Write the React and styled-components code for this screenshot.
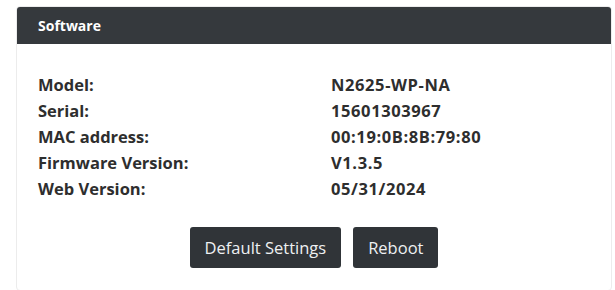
import styled, { createGlobalStyle } from "styled-components";

const GlobalStyle = createGlobalStyle`
  html, body {
    margin: 0;
    padding: 0;
    background: #fff;
  }
  body {
    font-family: "Open Sans", "Noto Sans", sans-serif;
  }
`;

const Page = styled.div`
  width: 615px;
  height: 290px;
  padding: 6px 3px 1px 16px;
  box-sizing: border-box;
`;

const Card = styled.section`
  height: 100%;
  border: 1px solid #ececec;
  border-radius: 4px;
  overflow: hidden;
  display: flex;
  flex-direction: column;
  background: #fff;
`;

const CardHeader = styled.div`
  background: #35393d;
  color: #fff;
  height: 37px;
  display: flex;
  align-items: center;
  padding-left: 21px;
  font-size: 14px;
  font-weight: 700;
`;

const CardBody = styled.div`
  flex: 1;
  padding: 28px 21px 0;
  display: flex;
  flex-direction: column;
`;

const InfoGrid = styled.div`
  display: grid;
  grid-template-columns: 293px 1fr;
`;

const Cell = styled.div`
  font-size: 16.5px;
  font-weight: 700;
  color: #2e2e2e;
  line-height: 26px;
  height: 26px;
  letter-spacing: ${(p) => (p.$value ? "0.6px" : "0")};
`;

const Actions = styled.div`
  display: flex;
  justify-content: center;
  gap: 12px;
  margin-top: 25px;
`;

const Button = styled.button`
  background: #303438;
  color: #eef0f2;
  border: none;
  border-radius: 3px;
  height: 41px;
  padding: 0 15px;
  font-family: "Open Sans", "Noto Sans", sans-serif;
  font-size: 16.5px;
  cursor: pointer;
`;

const rows = [
  ["Model:", "N2625-WP-NA"],
  ["Serial:", "15601303967"],
  ["MAC address:", "00:19:0B:8B:79:80"],
  ["Firmware Version:", "V1.3.5"],
  ["Web Version:", "05/31/2024"],
];

export default function App() {
  return (
    <>
      <GlobalStyle />
      <Page>
        <Card>
          <CardHeader>Software</CardHeader>
          <CardBody>
            <InfoGrid>
              {rows.flatMap(([label, value]) => [
                <Cell key={label}>{label}</Cell>,
                <Cell key={label + "-v"} $value>
                  {value}
                </Cell>,
              ])}
            </InfoGrid>
            <Actions>
              <Button>Default Settings</Button>
              <Button>Reboot</Button>
            </Actions>
          </CardBody>
        </Card>
      </Page>
    </>
  );
}
